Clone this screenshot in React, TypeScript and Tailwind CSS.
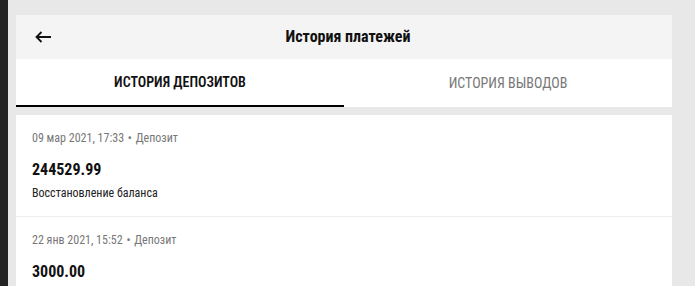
import React from "react";

const font = { fontFamily: "'Roboto Condensed', Roboto, 'Liberation Sans', sans-serif" };

function Item({ date, amount, desc }: { date: string; amount: string; desc?: string }) {
  return (
    <div className="px-4 pt-[15px] pb-[15px] border-b border-[#eeeeee]">
      <div className="text-[12px] leading-4 text-[#777777] [font-stretch:condensed]">
        {date} <span className="mx-[1px]">•</span> Депозит
      </div>
      <div className="mt-[14px] text-[16px] leading-5 font-bold text-[#111111] [font-stretch:condensed]">{amount}</div>
      {desc && (
        <div className="mt-[5px] text-[12px] leading-4 text-[#222222] [font-stretch:condensed]">{desc}</div>
      )}
    </div>
  );
}

export default function App() {
  return (
    <div className="flex h-[286px] w-full overflow-hidden bg-[#e8e8e8]" style={font}>
      <div className="w-2 shrink-0 bg-[#232323]" />
      <div className="flex-1 pl-2 pr-[23px] pt-[15px]">
        <div className="w-[656px]">
          <div className="grid h-[44px] grid-cols-[1fr_auto_1fr] items-center bg-[#f4f4f4]">
            <div className="pl-[19px]">
              <svg width="16" height="12" viewBox="0 0 16 12" fill="none">
                <path d="M16 6H2M6.5 1L1.5 6l5 5" stroke="#111" strokeWidth="1.8" />
              </svg>
            </div>
            <div className="ml-2 text-[16px] font-bold text-[#111111] [font-stretch:condensed]">История платежей</div>
            <div />
          </div>
          <div className="grid h-[48px] grid-cols-2 bg-white">
            <div className="flex items-center justify-center border-b-2 border-black text-[14px] font-semibold uppercase text-[#111111] [font-stretch:condensed]">
              История депозитов
            </div>
            <div className="flex items-center justify-center text-[14px] uppercase text-[#777777] [font-stretch:condensed]">
              История выводов
            </div>
          </div>
          <div className="mt-2 bg-white">
            <Item date="09 мар 2021, 17:33" amount="244529.99" desc="Восстановление баланса" />
            <Item date="22 янв 2021, 15:52" amount="3000.00" />
          </div>
        </div>
      </div>
    </div>
  );
}
